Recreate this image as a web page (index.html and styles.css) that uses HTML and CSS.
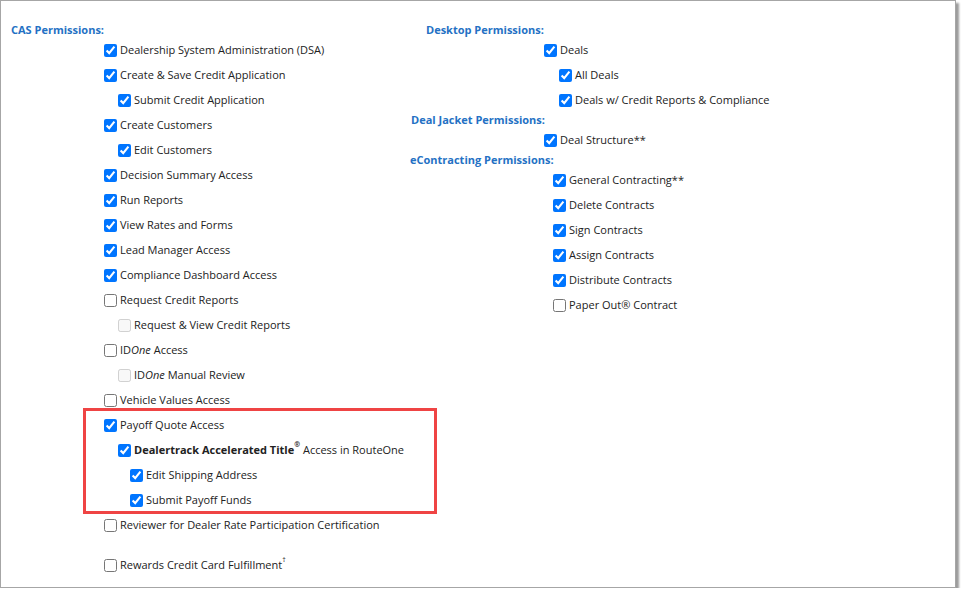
FILE: index.html
```html
<!DOCTYPE html>
<html>
<head>
<meta charset="utf-8">
<link rel="stylesheet" href="styles.css">
</head>
<body>
<div class="frame">
  <div class="col col-left">
    <div class="heading">CAS Permissions:</div>
    <div class="list list-cas">
      <label class="row l1"><input type="checkbox" checked>Dealership System Administration (DSA)</label>
      <label class="row l1"><input type="checkbox" checked>Create &amp; Save Credit Application</label>
      <label class="row l2"><input type="checkbox" checked>Submit Credit Application</label>
      <label class="row l1"><input type="checkbox" checked>Create Customers</label>
      <label class="row l2"><input type="checkbox" checked>Edit Customers</label>
      <label class="row l1"><input type="checkbox" checked>Decision Summary Access</label>
      <label class="row l1"><input type="checkbox" checked>Run Reports</label>
      <label class="row l1"><input type="checkbox" checked>View Rates and Forms</label>
      <label class="row l1"><input type="checkbox" checked>Lead Manager Access</label>
      <label class="row l1"><input type="checkbox" checked>Compliance Dashboard Access</label>
      <label class="row l1"><input type="checkbox">Request Credit Reports</label>
      <label class="row l2"><input type="checkbox" disabled>Request &amp; View Credit Reports</label>
      <label class="row l1"><input type="checkbox">ID<i>One</i>&nbsp;Access</label>
      <label class="row l2"><input type="checkbox" disabled>ID<i>One</i>&nbsp;Manual Review</label>
      <label class="row l1"><input type="checkbox">Vehicle Values Access</label>
      <label class="row l1"><input type="checkbox" checked>Payoff Quote Access</label>
      <label class="row l2"><input type="checkbox" checked><b>Dealertrack Accelerated Title</b><sup class="reg">®</sup>&nbsp;Access in RouteOne</label>
      <label class="row l3"><input type="checkbox" checked>Edit Shipping Address</label>
      <label class="row l3"><input type="checkbox" checked>Submit Payoff Funds</label>
      <label class="row l1"><input type="checkbox">Reviewer for Dealer Rate Participation Certification</label>
      <label class="row l1 spaced"><input type="checkbox">Rewards Credit Card Fulfillment<sup class="dag">†</sup></label>
    </div>
  </div>
  <div class="col col-right">
    <div class="heading h-desktop">Desktop Permissions:</div>
    <div class="list list-desktop">
      <label class="row"><input type="checkbox" checked>Deals</label>
      <label class="row l2"><input type="checkbox" checked>All Deals</label>
      <label class="row l2"><input type="checkbox" checked>Deals w/ Credit Reports &amp; Compliance</label>
    </div>
    <div class="heading h-jacket">Deal Jacket Permissions:</div>
    <div class="list list-desktop">
      <label class="row"><input type="checkbox" checked>Deal Structure**</label>
    </div>
    <div class="heading">eContracting Permissions:</div>
    <div class="list list-econ">
      <label class="row"><input type="checkbox" checked>General Contracting**</label>
      <label class="row"><input type="checkbox" checked>Delete Contracts</label>
      <label class="row"><input type="checkbox" checked>Sign Contracts</label>
      <label class="row"><input type="checkbox" checked>Assign Contracts</label>
      <label class="row"><input type="checkbox" checked>Distribute Contracts</label>
      <label class="row"><input type="checkbox">Paper Out® Contract</label>
    </div>
  </div>
  <div class="highlight"></div>
</div>
</body>
</html>
```

FILE: styles.css
```css
html, body {
  margin: 0;
  padding: 0;
  background: #ffffff;
}

body {
  font-family: "Open Sans", "Noto Sans", sans-serif;
  font-size: 11px;
  color: #222222;
}

.frame {
  position: relative;
  box-sizing: border-box;
  width: 956px;
  height: 588px;
  border: 1px solid #a6a6a6;
  box-shadow: 3px 3px 2px #9c9c9c;
  display: flex;
  padding: 19px 0 0 10px;
}

.col {
  display: flex;
  flex-direction: column;
}

.col-left {
  width: 399px;
}

.heading {
  height: 20px;
  line-height: 20px;
  font-weight: bold;
  color: #2471c4;
  white-space: nowrap;
}

.h-desktop {
  padding-left: 16px;
}

.h-jacket {
  padding-left: 1px;
}

.list {
  display: flex;
  flex-direction: column;
  gap: 5px;
}

.list-cas {
  padding-left: 89px;
}

.list-desktop {
  padding-left: 130px;
}

.list-econ {
  padding-left: 139px;
}

.row {
  display: flex;
  align-items: center;
  height: 20px;
  line-height: 20px;
  white-space: nowrap;
}

.row input {
  width: 13px;
  height: 13px;
  margin: 0 3px 0 4px;
  flex: none;
}

.l2 {
  padding-left: 14px;
}

.col-right .l2 {
  padding-left: 15px;
}

.l3 {
  padding-left: 26px;
}

.spaced {
  margin-top: 15px;
}

.reg {
  font-size: 7px;
  line-height: 0;
  align-self: flex-start;
  margin-top: 5px;
  font-weight: bold;
}

.dag {
  font-size: 7px;
  line-height: 0;
  align-self: flex-start;
  margin-top: 5px;
}

.highlight {
  position: absolute;
  left: 82px;
  top: 407px;
  width: 354px;
  height: 106px;
  box-sizing: border-box;
  border: 3px solid #ef4444;
}
```
